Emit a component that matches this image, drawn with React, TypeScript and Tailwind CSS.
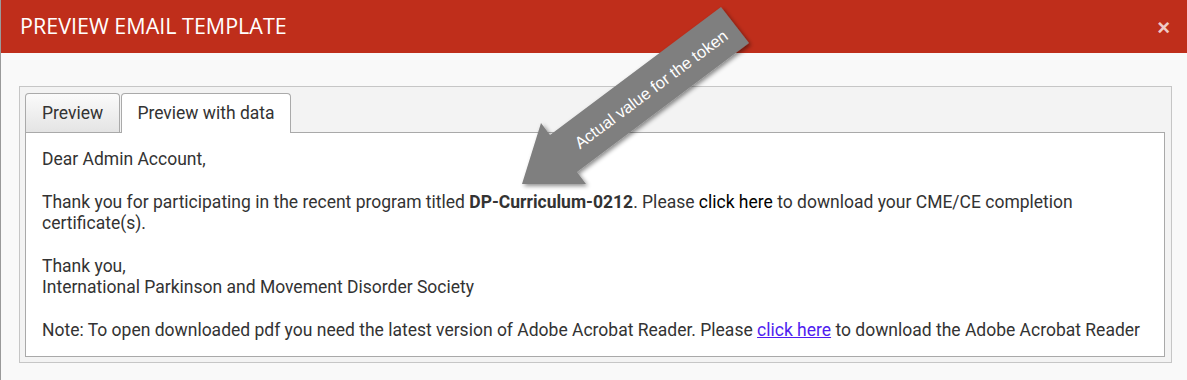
import React from 'react';

const TokenArrow = () => (
    <svg className="absolute left-[500px] top-0 pointer-events-none" width="270" height="200" viewBox="0 0 270 200">
        <defs>
            <filter id="arrowShadow" x="-20%" y="-20%" width="140%" height="140%">
                <feDropShadow dx="2" dy="2" stdDeviation="2" floodColor="#000" floodOpacity="0.45" />
            </filter>
        </defs>
        <polygon
            points="220,7 49,135 40,123 21,184 85,184 76,172 248,43"
            fill="#7f7f7f"
            filter="url(#arrowShadow)"
        />
        <text
            x="150"
            y="89"
            transform="rotate(-36.7 150 89)"
            textAnchor="middle"
            dominantBaseline="central"
            fill="#ffffff"
            style={{ fontFamily: '"Liberation Sans", Arial, sans-serif', fontSize: '16.5px' }}
        >
            Actual value for the token
        </text>
    </svg>
);

export default function App() {
    return (
        <div className="relative w-[1187px] h-[380px] overflow-hidden bg-[#f9f9f9] border-l border-[#9a9a9a]">
            <div className="h-[53px] bg-[#bf2e1b] flex items-center justify-between pl-[19px] pr-[17px]">
                <h1 className="text-white text-[21.5px] font-['Open_Sans',sans-serif] tracking-normal">PREVIEW EMAIL TEMPLATE</h1>
                <span className="text-white/75 text-[22px] font-bold leading-none font-['Liberation_Sans',sans-serif] mt-[2px]">×</span>
            </div>

            <div className="pt-[33px] pl-[18px] pr-[15px]">
                <div className="border border-[#c6c6c6] bg-[#f3f3f3] pt-[6px] pl-[5px] pr-[6px] pb-[5px]">
                    <div className="flex items-end gap-px font-['Roboto',sans-serif] text-[17.5px] text-[#333]">
                        <div className="h-[39px] w-[95px] flex items-center justify-center border border-b-0 border-[#aaa] rounded-t-[4px] bg-gradient-to-b from-[#fbfbfb] to-[#e4e4e4]">
                            Preview
                        </div>
                        <div className="relative z-10 h-[40px] -mb-px w-[170px] flex items-center justify-center border border-b-0 border-[#aaa] rounded-t-[4px] bg-white pb-px">
                            Preview with data
                        </div>
                    </div>
                    <div className="border border-[#a9a9a9] bg-white pt-[16px] pb-[15px] px-[16px] font-['Roboto',sans-serif] text-[17.5px] leading-[21.33px] text-[#333]">
                        <p>Dear Admin Account,</p>
                        <br />
                        <p>
                            Thank you for participating in the recent program titled <b className="font-bold">DP-Curriculum-0212</b>. Please <span className="text-black">click here</span> to download your CME/CE completion certificate(s).
                        </p>
                        <br />
                        <p>
                            Thank you,
                            <br />
                            International Parkinson and Movement Disorder Society
                        </p>
                        <br />
                        <p>
                            Note: To open downloaded pdf you need the latest version of Adobe Acrobat Reader. Please <a href="#" className="text-[#4f1df0] underline">click here</a> to download the Adobe Acrobat Reader
                        </p>
                    </div>
                </div>
            </div>

            <TokenArrow />
        </div>
    );
}
